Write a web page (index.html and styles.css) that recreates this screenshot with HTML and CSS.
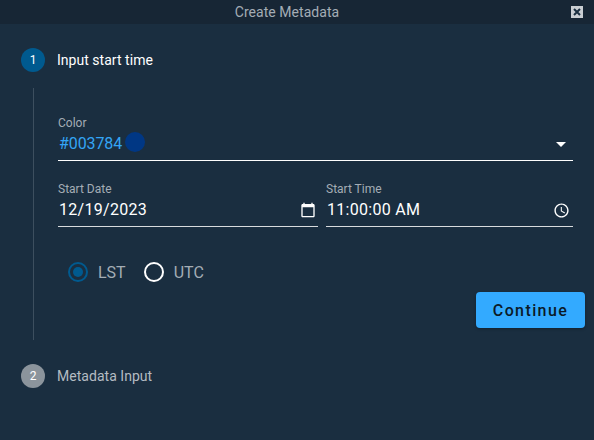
FILE: index.html
```html
<!DOCTYPE html>
<html lang="en">

<head>
    <meta charset="UTF-8">
    <meta name="viewport" content="width=device-width, initial-scale=1.0">
    <title>Create Metadata</title>
    <link rel="stylesheet" href="styles.css">
</head>

<body>
    <header class="titlebar">
        <span class="title">Create Metadata</span>
        <span class="close">
            <svg width="8" height="8" viewBox="0 0 8 8"><path d="M1 1l6 6M7 1l-6 6" stroke="#1a2e40" stroke-width="2" fill="none"/></svg>
        </span>
    </header>

    <section class="step">
        <span class="step-num active">1</span>
        <span class="step-label active">Input start time</span>
    </section>

    <section class="step-body">
        <div class="field field-color">
            <label class="field-label">Color</label>
            <div class="field-row">
                <span class="color-value">#003784</span>
                <span class="swatch"></span>
                <span class="caret"></span>
            </div>
        </div>

        <div class="date-row">
            <div class="field field-date">
                <label class="field-label">Start Date</label>
                <div class="field-row">
                    <span class="field-value">12/19/2023</span>
                    <svg class="icon" width="16" height="16" viewBox="0 0 24 24"><path fill="#fff" d="M20 3h-1V1h-2v2H7V1H5v2H4c-1.1 0-2 .9-2 2v16c0 1.1.9 2 2 2h16c1.1 0 2-.9 2-2V5c0-1.1-.9-2-2-2zm0 18H4V8h16v13z"/></svg>
                </div>
            </div>
            <div class="field field-time">
                <label class="field-label">Start Time</label>
                <div class="field-row">
                    <span class="field-value">11:00:00 AM</span>
                    <svg class="icon icon-clock" width="17" height="17" viewBox="0 0 24 24"><path fill="#fff" d="M11.99 2C6.47 2 2 6.48 2 12s4.47 10 9.99 10C17.52 22 22 17.52 22 12S17.52 2 11.99 2zM12 20c-4.42 0-8-3.58-8-8s3.58-8 8-8 8 3.58 8 8-3.58 8-8 8zm.5-13H11v6l5.25 3.15.75-1.23-4.5-2.67z"/></svg>
                </div>
            </div>
        </div>

        <div class="radios">
            <span class="radio checked"></span>
            <span class="radio-label">LST</span>
            <span class="radio"></span>
            <span class="radio-label">UTC</span>
        </div>

        <div class="actions">
            <button type="button" class="continue">Continue</button>
        </div>
    </section>

    <section class="step">
        <span class="step-num">2</span>
        <span class="step-label">Metadata Input</span>
    </section>
</body>

</html>
```

FILE: styles.css
```css
html,
body {
    height: 100%;
}

body {
    margin: 0;
    overflow: hidden;
    background-color: #1a2e40;
    color: #fff;
    font-family: Roboto, sans-serif;
}

.titlebar {
    display: flex;
    align-items: center;
    justify-content: center;
    position: relative;
    height: 24px;
    padding-right: 20px;
    background-color: #172635;
}

.title {
    font-size: 14px;
    letter-spacing: 0.05px;
    color: #a4adb5;
}

.close {
    display: flex;
    align-items: center;
    justify-content: center;
    position: absolute;
    right: 11px;
    top: 6px;
    width: 12px;
    height: 12px;
    background-color: #c9ced3;
}

.step {
    display: flex;
    align-items: center;
    gap: 12px;
    height: 24px;
    margin-top: 24px;
    padding-left: 21px;
}

.step-num {
    display: flex;
    align-items: center;
    justify-content: center;
    width: 24px;
    height: 24px;
    border-radius: 50%;
    background-color: #8b949c;
    font-size: 12px;
}

.step-num.active {
    background-color: #005a8f;
}

.step-label {
    font-size: 14px;
    letter-spacing: 0.03px;
    color: #b4bbc2;
}

.step-label.active {
    color: #fff;
}

.step-body {
    margin: 16px 0 24px 33px;
    height: 252px;
    padding: 28px 21px 0 24px;
    border-left: 1px solid #3d4f5f;
    box-sizing: border-box;
}

.field-label {
    display: block;
    height: 15px;
    font-size: 12px;
    line-height: 15px;
    color: #a4adb5;
}

.field-row {
    display: flex;
    align-items: center;
    height: 24px;
    padding-bottom: 5px;
    border-bottom: 1px solid #d8dbde;
}

.field-color .field-row {
    border-bottom-color: #fff;
}

.color-value {
    padding-left: 1px;
    font-size: 16px;
    letter-spacing: -0.1px;
    color: #33a5f5;
}

.swatch {
    width: 20px;
    height: 20px;
    margin-left: 3px;
    margin-bottom: 2px;
    border-radius: 50%;
    background-color: #003784;
}

.caret {
    margin-left: auto;
    margin-right: 7px;
    margin-top: 3px;
    border-left: 5px solid transparent;
    border-right: 5px solid transparent;
    border-top: 5px solid #fff;
}

.date-row {
    display: flex;
    gap: 8px;
    margin-top: 21px;
}

.field-date {
    flex: 0 0 260px;
}

.field-time {
    flex: 1;
}

.field-value {
    padding-left: 1px;
    font-size: 16px;
    letter-spacing: 0.3px;
}

.icon {
    margin-left: auto;
    margin-top: 1px;
    margin-right: 2px;
}

.icon-clock {
    margin-right: 3px;
    margin-top: 2px;
}

.radios {
    display: flex;
    align-items: center;
    margin: 35px 0 0 10px;
    height: 20px;
}

.radio {
    box-sizing: border-box;
    display: flex;
    align-items: center;
    justify-content: center;
    width: 20px;
    height: 20px;
    border: 2px solid #fff;
    border-radius: 50%;
}

.radio.checked {
    border-color: #005a8f;
}

.radio.checked::after {
    content: "";
    width: 10px;
    height: 10px;
    border-radius: 50%;
    background-color: #005a8f;
}

.radio-label {
    margin: 0 18px 0 10px;
    font-size: 16px;
    color: #a4adb5;
}

.actions {
    display: flex;
    justify-content: flex-end;
    margin: 10px -12px 0 0;
}

.continue {
    width: 109px;
    height: 36px;
    border: none;
    border-radius: 4px;
    background-color: #33aaff;
    box-shadow: 0 1px 3px rgba(0, 0, 0, 0.3);
    color: #0b1a28;
    font-family: Roboto, sans-serif;
    font-size: 16px;
    font-weight: 500;
    letter-spacing: 1.4px;
}
```
